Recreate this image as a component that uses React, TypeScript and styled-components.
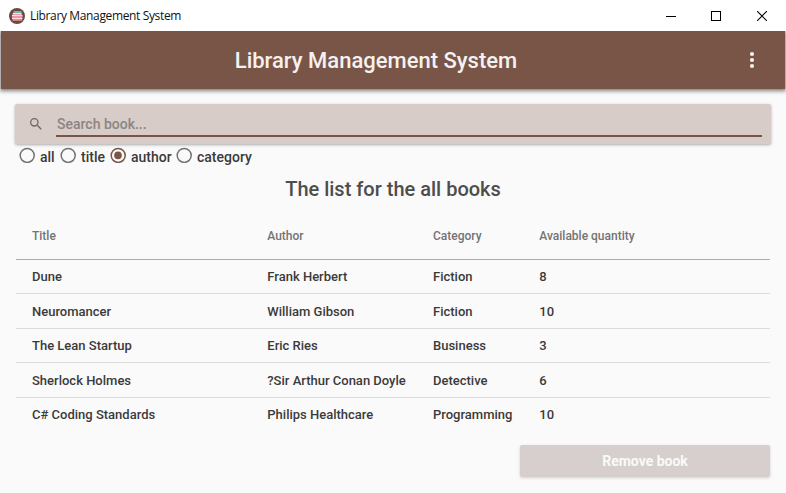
import React, { useState } from "react";
import styled, { createGlobalStyle } from "styled-components";

const GlobalStyle = createGlobalStyle`
  * { box-sizing: border-box; }
  html, body { margin: 0; padding: 0; overflow: hidden; }
  body { background: #fafafa; font-family: Roboto, "Liberation Sans", sans-serif; }
`;

const Window = styled.div`
  width: 786px;
  height: 493px;
  display: flex;
  flex-direction: column;
  background: #fafafa;
  color: #3a3a3a;
  font-weight: 500;
  white-space: nowrap;
`;

const TitleBar = styled.header`
  height: 31px;
  flex: none;
  position: relative;
  z-index: 1;
  display: flex;
  align-items: center;
  background: #fff;
  padding: 0 1px 0 9px;
`;

const WindowTitle = styled.span`
  flex: 1;
  margin-left: 5px;
  font: 400 12px/18px "Open Sans", "Noto Sans", sans-serif;
  letter-spacing: -0.36px;
  color: #111;
`;

const WindowButton = styled.button<{ $width?: number }>`
  width: ${(p) => p.$width ?? 46}px;
  height: 30px;
  padding: 0;
  border: 0;
  background: transparent;
  display: flex;
  align-items: center;
  justify-content: center;
`;

const AppBar = styled.div`
  height: 58px;
  flex: none;
  margin: 0 1px;
  display: grid;
  grid-template-columns: 1fr 54px;
  align-items: center;
  padding: 0 6px 0 26px;
  background: #795548;
  color: #f5f1ef;
  box-shadow: 0 1px 4px 1px rgba(0, 0, 0, 0.5);
`;

const AppTitle = styled.h1`
  margin: 2px 0 0;
  text-align: center;
  font-size: 22px;
  line-height: 28px;
  font-weight: 500;
`;

const MenuButton = styled.button`
  height: 40px;
  border: 0;
  padding: 0;
  background: transparent;
  display: flex;
  align-items: center;
  justify-content: center;
`;

const Content = styled.main`
  flex: 1;
  display: flex;
  flex-direction: column;
  padding: 15px 16px 0;
`;

const SearchCard = styled.div`
  height: 40px;
  margin: 0 -1px;
  display: flex;
  align-items: flex-start;
  padding: 8px 9px 0 13px;
  border-radius: 2px;
  background: #d7ccc8;
  box-shadow: 0 1px 3px rgba(0, 0, 0, 0.32);
`;

const SearchIcon = styled.svg`
  width: 16px;
  height: 16px;
  margin-top: 4px;
`;

const SearchInput = styled.input`
  flex: 1;
  min-width: 0;
  height: 25px;
  margin-left: 12px;
  padding: 0 0 0 1px;
  border: 0;
  border-bottom: 2px solid #795548;
  outline: 0;
  background: transparent;
  color: #3a3a3a;
  font: 500 14px Roboto, sans-serif;
  &::placeholder { color: #8d8583; opacity: 1; }
`;

const Filters = styled.div`
  display: flex;
  align-items: center;
  height: 24px;
  padding-left: 3px;
`;

const FilterOption = styled.button<{ $width: number }>`
  width: ${(p) => p.$width}px;
  height: 24px;
  padding: 0;
  border: 0;
  background: transparent;
  display: flex;
  align-items: center;
  gap: 5px;
  color: #3a3a3a;
  font: 500 14px Roboto, sans-serif;
`;

const RadioMark = styled.svg`
  width: 16px;
  height: 16px;
  flex: none;
  margin-bottom: 2px;
`;

const FilterLabel = styled.span`
  padding-top: 2px;
`;

const Heading = styled.h2`
  margin: 8px 0 0;
  height: 26px;
  line-height: 26px;
  text-align: center;
  font-size: 20px;
  font-weight: 500;
  color: #4d4d4d;
`;

const Table = styled.div`
  margin-top: 11px;
`;

const columns = `
  display: grid;
  grid-template-columns: 235.3px 165.7px 106.3px 1fr;
  align-items: center;
  padding-left: 16px;
`;

const HeaderRow = styled.div`
  ${columns}
  height: 47px;
  border-bottom: 1px solid #adadad;
  color: #737373;
  font-size: 12px;
`;

const Row = styled.div<{ $height: number; $last: boolean }>`
  ${columns}
  height: ${(p) => p.$height}px;
  border-bottom: 1px solid ${(p) => (p.$last ? "transparent" : "#dcdcdc")};
  font-size: 13px;
`;

const RemoveButton = styled.button`
  align-self: flex-end;
  width: 250px;
  height: 32px;
  margin-top: 13px;
  padding: 0;
  border: 0;
  border-radius: 2px;
  background: #d7cfcd;
  color: #fafafa;
  font: 700 14px Roboto, sans-serif;
  box-shadow: 0 1px 3px rgba(0, 0, 0, 0.17);
`;

const filters = [
  { name: "all", width: 41 },
  { name: "title", width: 50 },
  { name: "author", width: 66 },
  { name: "category", width: 80 },
];

const books = [
  ["Dune", "Frank Herbert", "Fiction", "8"],
  ["Neuromancer", "William Gibson", "Fiction", "10"],
  ["The Lean Startup", "Eric Ries", "Business", "3"],
  ["Sherlock Holmes", "?Sir Arthur Conan Doyle", "Detective", "6"],
  ["C# Coding Standards", "Philips Healthcare", "Programming", "10"],
];

const AppLogo = () => (
  <svg width="16" height="16" viewBox="0 0 16 16">
    <circle cx="8" cy="8" r="8" fill="#694a43" />
    <path d="M4.5 3h8v2h-8z" fill="#68bda0" />
    <path d="M3.5 5.5H13V7H3.5zM3 8h10.5v2H3z" fill="#f294ae" />
    <path d="M4 5.5h8.5M3 7.5h10.5M3 10.5h10.5" stroke="#f7dfe3" />
    <path d="M3.5 11H13v1.8H3.5z" fill="#f08b80" />
  </svg>
);

export default function App() {
  const [filter, setFilter] = useState("author");
  const [query, setQuery] = useState("");

  return (
    <>
      <GlobalStyle />
      <Window>
        <TitleBar>
          <AppLogo />
          <WindowTitle>Library Management System</WindowTitle>
          <WindowButton $width={44} aria-label="Minimize">
            <svg width="10" height="10" shapeRendering="crispEdges"><path d="M0 5.5h10" stroke="#000" /></svg>
          </WindowButton>
          <WindowButton aria-label="Maximize">
            <svg width="10" height="10" shapeRendering="crispEdges"><path d="M.5.5h9v9h-9z" fill="none" stroke="#000" /></svg>
          </WindowButton>
          <WindowButton aria-label="Close">
            <svg width="10" height="10"><path d="M0 0l10 10M10 0L0 10" stroke="#000" strokeWidth="1.1" /></svg>
          </WindowButton>
        </TitleBar>
        <AppBar>
          <AppTitle>Library Management System</AppTitle>
          <MenuButton aria-label="Menu">
            <svg width="6" height="18" fill="#f5f1ef">
              <circle cx="3" cy="3" r="2.1" />
              <circle cx="3" cy="9" r="2.1" />
              <circle cx="3" cy="15" r="2.1" />
            </svg>
          </MenuButton>
        </AppBar>
        <Content>
          <SearchCard>
            <SearchIcon viewBox="0 0 24 24" fill="#6f6967">
              <path d="M9.5 3A6.5 6.5 0 0 1 16 9.5c0 1.61-.59 3.09-1.56 4.23l.27.27h.79l5 5-1.5 1.5-5-5v-.79l-.27-.27A6.52 6.52 0 0 1 9.5 16a6.5 6.5 0 0 1 0-13m0 2a4.5 4.5 0 1 0 0 9 4.5 4.5 0 0 0 0-9z" />
            </SearchIcon>
            <SearchInput placeholder="Search book..." value={query} onChange={(e) => setQuery(e.target.value)} />
          </SearchCard>
          <Filters>
            {filters.map(({ name, width }) => {
              const active = name === filter;
              return (
                <FilterOption key={name} $width={width} onClick={() => setFilter(name)}>
                  <RadioMark viewBox="0 0 16 16">
                    <circle cx="8.2" cy="8.4" r="7" fill="none" stroke={active ? "#795548" : "#737373"} strokeWidth="1.5" />
                    {active && <circle cx="8" cy="8.4" r="3.8" fill="#795548" />}
                  </RadioMark>
                  <FilterLabel>{name}</FilterLabel>
                </FilterOption>
              );
            })}
          </Filters>
          <Heading>The list for the all books</Heading>
          <Table>
            <HeaderRow>
              <span>Title</span>
              <span>Author</span>
              <span>Category</span>
              <span>Available quantity</span>
            </HeaderRow>
            {books.map((book, i) => (
              <Row key={book[0]} $height={i % 2 ? 35 : 34} $last={i === books.length - 1}>
                {book.map((value, c) => <span key={c}>{value}</span>)}
              </Row>
            ))}
          </Table>
          <RemoveButton>Remove book</RemoveButton>
        </Content>
      </Window>
    </>
  );
}
